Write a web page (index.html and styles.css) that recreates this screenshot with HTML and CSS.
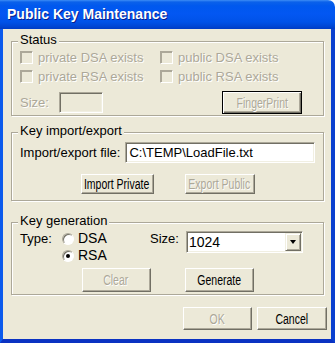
FILE: index.html
```html
<!DOCTYPE html>
<html>
<head>
  <title>Public Key Maintenance</title>
  <link rel="stylesheet" href="styles.css">
</head>
<body>
  <div class="window">
    <div class="titlebar">Public Key Maintenance</div>

    <div class="client">
      <fieldset class="group status">
        <legend>Status</legend>
        <div class="checks">
          <label class="check dim"><span class="box"></span>private DSA exists</label>
          <label class="check dim"><span class="box"></span>public DSA exists</label>
          <label class="check dim"><span class="box"></span>private RSA exists</label>
          <label class="check dim"><span class="box"></span>public RSA exists</label>
        </div>
        <div class="size-row">
          <span class="size-label dim">Size:</span>
          <span class="field field-off"></span>
          <button class="btn btn-default btn-finger" disabled><span>FingerPrint</span></button>
        </div>
      </fieldset>

      <fieldset class="group keyfile">
        <legend>Key import/export</legend>
        <div class="file-row">
          <span>Import/export file:</span>
          <span class="field">C:\TEMP\LoadFile.txt</span>
        </div>
        <div class="btn-row file-btns">
          <button class="btn btn-import"><span>Import Private</span></button>
          <button class="btn btn-export" disabled><span>Export Public</span></button>
        </div>
      </fieldset>

      <fieldset class="group keygen">
        <legend>Key generation</legend>
        <div class="gen-top">
          <span class="type-label">Type:</span>
          <div class="radios">
            <label class="radio-opt"><span class="radio"></span>DSA</label>
            <label class="radio-opt"><span class="radio checked"></span>RSA</label>
          </div>
          <span class="gen-size-label">Size:</span>
          <div class="combo">
            <span class="combo-value">1024</span>
            <span class="combo-arrow"><span class="tri"></span></span>
          </div>
        </div>
        <div class="btn-row gen-btns">
          <button class="btn btn-gen" disabled><span>Clear</span></button>
          <button class="btn btn-gen"><span>Generate</span></button>
        </div>
      </fieldset>

      <div class="footer">
        <button class="btn btn-ok" disabled><span>OK</span></button>
        <button class="btn btn-cancel"><span>Cancel</span></button>
      </div>
    </div>
  </div>
</body>
</html>
```

FILE: styles.css
```css
body {
  margin: 0;
  background: #fff;
  font-family: "Liberation Sans", Arial, sans-serif;
  font-size: 13px;
  color: #000;
}
.window {
  width: 335px;
  height: 343px;
  display: flex;
  flex-direction: column;
}
.titlebar {
  height: 29px;
  box-sizing: border-box;
  padding: 7px 0 0 7px;
  line-height: 15px;
  font-size: 14px;
  font-weight: bold;
  color: #fff;
  text-shadow: 1px 1px #0a1e8a;
  border-top-right-radius: 7px;
  background: linear-gradient(#3d8df5 0px, #0b61ea 2px, #0058ee 6px, #0357f2 14px, #0052e8 22px, #0047d6 26px, #003cc4 29px);
}
.client {
  flex: 1;
  background: #ece9d8;
  border-style: solid;
  border-width: 0 4px 4px 3px;
  border-color: #0846d8 #0a3fcf #0a32c2 #0b5aec;
  padding-top: 3px;
}

/* group boxes */
.group {
  margin: 0 7px 0 8px;
  padding: 0 8px 1px 8px;
  border: 1px solid #aca899;
  box-shadow: inset 1px 1px #fff, 1px 1px #fff;
  min-width: 0;
}
.group legend {
  margin-left: -2px;
  padding: 0 2px 3px;
  line-height: 15px;
  background: #ece9d8;
}
.keyfile {
  margin-top: 7px;
  padding-bottom: 6px;
}
.keygen {
  margin-top: 12px;
  padding-bottom: 2px;
}

.dim {
  color: #aca899;
  text-shadow: 1px 1px #fff;
}

/* status */
.checks {
  display: grid;
  grid-template-columns: 140px 1fr;
  row-gap: 4px;
}
.check {
  display: flex;
  align-items: center;
  gap: 5px;
  line-height: 15px;
}
.box {
  width: 13px;
  height: 13px;
  box-sizing: border-box;
  border: 1px solid;
  border-color: #aca899 #fff #fff #aca899;
  box-shadow: inset 1px 1px #aca899;
  background: #ece9d8;
}
.size-row {
  display: flex;
  align-items: center;
  height: 23px;
  margin-top: 7px;
}
.size-label {
  width: 39px;
}

/* edit fields */
.field {
  height: 21px;
  box-sizing: border-box;
  border: 1px solid;
  border-color: #aca899 #fff #fff #aca899;
  box-shadow: inset 1px 1px #716f64, inset -1px -1px #f1efe2;
  background: #fff;
  padding: 1px 0 0 3px;
  line-height: 17px;
}
.field-off {
  width: 44px;
  background: #ece9d8;
}
.file-row {
  display: flex;
  align-items: center;
  gap: 5px;
  margin-top: 1px;
}
.file-row .field {
  flex: 1;
}

/* buttons */
.btn {
  display: flex;
  align-items: center;
  justify-content: center;
  font-family: "Liberation Sans", Arial, sans-serif;
  font-size: 14px;
  color: #000;
  background: #ece9d8;
  box-sizing: border-box;
  padding: 0;
  white-space: nowrap;
  border: 1px solid;
  border-color: #fff #716f64 #716f64 #fff;
  box-shadow: inset -1px -1px #aca899;
}
.btn span {
  flex: none;
  transform: scaleX(0.75);
}
.btn:disabled {
  color: #aca899;
  text-shadow: 1px 1px #fff;
}
.btn-default {
  border-color: #000;
  box-shadow: inset 1px 1px #fff, inset -1px -1px #716f64, inset -2px -2px #aca899;
}
.btn-finger {
  width: 80px;
  height: 23px;
  margin-left: auto;
  margin-right: 13px;
}
.btn-row {
  display: flex;
  justify-content: center;
}
.file-btns {
  gap: 31px;
  margin-top: 11px;
}
.btn-import {
  width: 73px;
  height: 20px;
}
.btn-export {
  width: 70px;
  height: 20px;
}
.gen-btns {
  gap: 34px;
  margin-top: 5px;
}
.btn-gen {
  width: 69px;
  height: 24px;
}

/* key generation */
.gen-top {
  display: flex;
  align-items: flex-start;
}
.type-label {
  width: 42px;
  line-height: 15px;
}
.radios {
  width: 88px;
  display: flex;
  flex-direction: column;
  gap: 2px;
}
.radio-opt {
  display: flex;
  align-items: center;
  gap: 4px;
  line-height: 15px;
  font-size: 14px;
}
.radio {
  position: relative;
  width: 12px;
  height: 12px;
  box-sizing: border-box;
  border-radius: 50%;
  border: 1px solid;
  border-color: #aca899 #fff #fff #aca899;
  box-shadow: inset 1px 1px #716f64;
  background: #fff;
}
.radio.checked::after {
  content: "";
  position: absolute;
  left: 3px;
  top: 3px;
  width: 4px;
  height: 4px;
  border-radius: 50%;
  background: #000;
}
.gen-size-label {
  width: 36px;
  line-height: 15px;
}
.combo {
  width: 117px;
  height: 22px;
  box-sizing: border-box;
  display: flex;
  border: 1px solid;
  border-color: #aca899 #fff #fff #aca899;
  background: #fff;
  box-shadow: inset 1px 1px #716f64, inset -1px -1px #f1efe2;
  padding: 1px;
}
.combo-value {
  flex: 1;
  padding-left: 1px;
  line-height: 18px;
  font-size: 14px;
}
.combo-arrow {
  width: 16px;
  box-sizing: border-box;
  display: flex;
  align-items: center;
  justify-content: center;
  background: #ece9d8;
  border: 1px solid;
  border-color: #f1efe2 #716f64 #716f64 #f1efe2;
  box-shadow: inset 1px 1px #fff, inset -1px -1px #aca899;
}
.tri {
  width: 0;
  height: 0;
  border-left: 3.5px solid transparent;
  border-right: 3.5px solid transparent;
  border-top: 4px solid #000;
}

/* dialog buttons */
.footer {
  display: flex;
  justify-content: flex-end;
  gap: 5px;
  margin-top: 12px;
  padding-right: 4px;
}
.btn-ok {
  width: 69px;
  height: 23px;
}
.btn-cancel {
  width: 70px;
  height: 23px;
}
```
